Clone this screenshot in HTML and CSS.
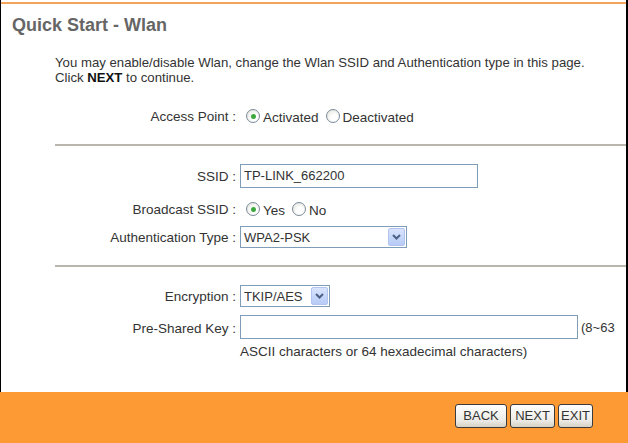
FILE: index.html
```html
<!DOCTYPE html>
<html>
<head>
<meta charset="utf-8">
<link rel="stylesheet" href="styles.css">
</head>
<body>
<div class="page">
  <div class="main">
    <div class="topline"></div>
    <h1 class="title">Quick Start - Wlan</h1>
    <p class="desc">You may enable/disable Wlan, change the Wlan SSID and Authentication type in this page.<br>Click <b>NEXT</b> to continue.</p>

    <div class="row row-ap">
      <span class="label">Access Point :</span>
      <span class="field">
        <span class="radio checked"></span><span class="rtext">Activated</span>
        <span class="radio"></span><span class="rtext">Deactivated</span>
      </span>
    </div>
    <div class="sep sep1"></div>

    <div class="row row-ssid">
      <span class="label">SSID :</span>
      <span class="field"><span class="input ssid">TP-LINK_662200</span></span>
    </div>
    <div class="row row-bc">
      <span class="label">Broadcast SSID :</span>
      <span class="field">
        <span class="radio checked"></span><span class="rtext">Yes</span>
        <span class="radio"></span><span class="rtext">No</span>
      </span>
    </div>
    <div class="row row-auth">
      <span class="label">Authentication Type :</span>
      <span class="field">
        <span class="select auth"><span class="sel-val">WPA2-PSK</span><span class="sel-btn"><svg width="9" height="6" viewBox="0 0 9 6"><path d="M1 1 L4.5 4.5 L8 1" fill="none" stroke="#4d6185" stroke-width="2"/></svg></span></span>
      </span>
    </div>
    <div class="sep sep2"></div>

    <div class="row row-enc">
      <span class="label">Encryption :</span>
      <span class="field">
        <span class="select enc"><span class="sel-val">TKIP/AES</span><span class="sel-btn"><svg width="9" height="6" viewBox="0 0 9 6"><path d="M1 1 L4.5 4.5 L8 1" fill="none" stroke="#4d6185" stroke-width="2"/></svg></span></span>
      </span>
    </div>
    <div class="row row-psk">
      <span class="label">Pre-Shared Key :</span>
      <span class="field psk-field">
        <span class="psk-line"><span class="input psk"></span><span class="hint">(8~63</span></span>
        <span class="hint2">ASCII characters or 64 hexadecimal characters)</span>
      </span>
    </div>
  </div>
  <div class="footer">
    <span class="btn b-back">BACK</span>
    <span class="btn b-next">NEXT</span>
    <span class="btn b-exit">EXIT</span>
  </div>
</div>
</body>
</html>
```
FILE: styles.css
```css
* { box-sizing: border-box; }
html, body { margin: 0; padding: 0; background: #fff; }
body { font-family: "Liberation Sans", Arial, sans-serif; font-size: 13px; color: #333; }
.page { width: 628px; height: 443px; display: flex; flex-direction: column; }
.main {
  height: 392px;
  border-left: 1px solid #000;
  border-right: 2px solid #000;
  padding-top: 2px;
}
.topline { height: 2px; background: #f5a55a; }
.title {
  margin: 10px 0 0 11px;
  font-size: 18px;
  line-height: 22px;
  font-weight: bold;
  color: #666;
}
.desc {
  margin: 19px 0 0 54px;
  font-size: 13.2px;
  line-height: 15px;
  color: #333;
}
.desc b { color: #111; }
.row { display: flex; align-items: center; }
.label { width: 239px; text-align: right; padding-right: 4px; flex: none; color: #333; font-size: 13.5px; }
.field { display: flex; align-items: center; }
.row-ap { height: 20px; margin-top: 21px; }
.sep { height: 2px; background: #b9b6ad; margin-left: 54px; }
.sep1 { margin-top: 18px; }
.row-ssid { height: 24px; margin-top: 18px; }
.row-bc { height: 20px; margin-top: 11px; }
.row-auth { height: 22px; margin-top: 7px; }
.sep2 { margin-top: 17px; }
.row-enc { height: 22px; margin-top: 18px; }
.row-psk { margin-top: 8px; align-items: flex-start; }
.row-psk .label { margin-top: 5px; line-height: 15px; padding-top: 1px; }
.radio {
  width: 14px; height: 14px; border-radius: 50%;
  border: 1px solid #7b8a99;
  background: radial-gradient(circle at 60% 65%, #fff 30%, #dcdcd4 100%);
  display: inline-flex; align-items: center; justify-content: center;
  margin: 0 3px 0 6px;
}
.radio.checked::after {
  content: ""; width: 5px; height: 5px; border-radius: 50%;
  background: #3aa83a;
}
.rtext { margin-right: 1px; padding-top: 2px; font-size: 13.5px; }
.input {
  display: inline-block; height: 24px;
  border: 1px solid #7f9db9; background: #fff;
  line-height: 22px; padding-left: 3px; color: #333;
}
.ssid { width: 238px; }
.psk { width: 338px; }
.select {
  display: inline-flex; align-items: center; height: 22px;
  border: 1px solid #7f9db9; background: #fff; padding: 0 1px 0 3px;
  justify-content: space-between;
}
.auth { width: 167px; }
.enc { width: 90px; }
.sel-btn {
  width: 17px; height: 18px; border-radius: 2px;
  background: linear-gradient(#d9e4fd, #b7cbf7);
  border: 1px solid #b0c4ef;
  display: inline-flex; align-items: center; justify-content: center;
}
.psk-field { flex-direction: column; align-items: flex-start; }
.psk-line { display: flex; align-items: center; }
.hint { margin-left: 3px; }
.hint2 { margin-top: 5px; line-height: 15px; font-size: 13.5px; }
.footer {
  flex: 1; background: #fd9a33;
  display: flex; justify-content: flex-end; align-items: flex-start;
  padding: 12px 35px 0 0; gap: 3px;
}
.btn {
  height: 24px; border: 1px solid #3b3b3b; border-radius: 3px;
  background: linear-gradient(#ffffff, #ecebe6 70%, #d6d2c6);
  color: #333; font-size: 13px; line-height: 22px; text-align: center;
}
.b-back { width: 52px; }
.b-next { width: 45px; }
.b-exit { width: 35px; }
```
